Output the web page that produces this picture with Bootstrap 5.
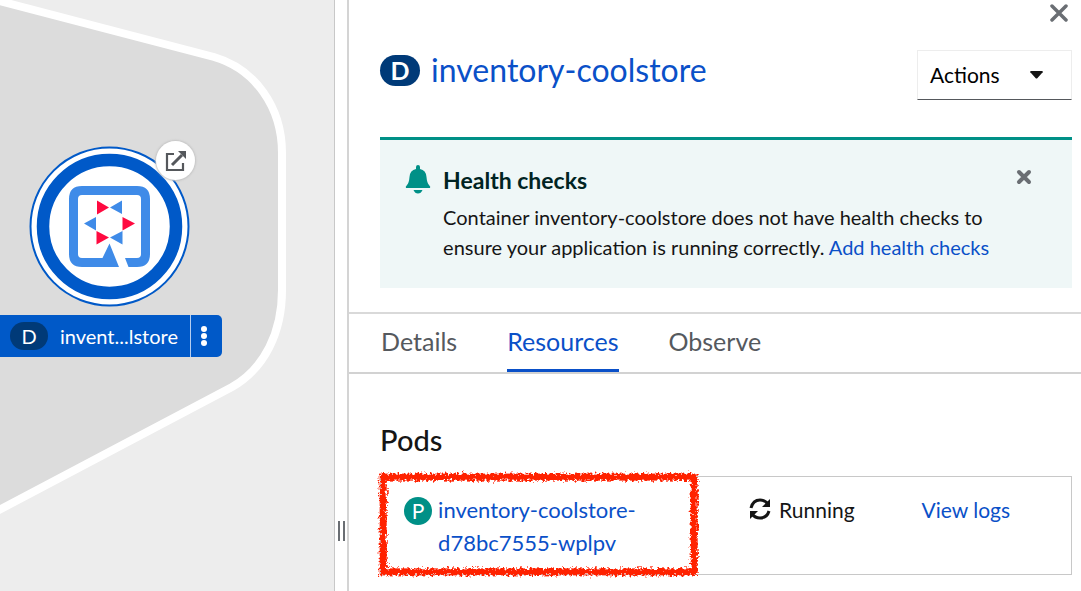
<!DOCTYPE html>
<html lang="en">
<head>
<meta charset="utf-8">
<meta name="viewport" content="width=device-width, initial-scale=1">
<title>inventory-coolstore</title>
<link href="https://cdn.jsdelivr.net/npm/bootstrap@5.3.0/dist/css/bootstrap.min.css" rel="stylesheet">
<style>
  body { font-family: Lato, "Open Sans", sans-serif; font-size: 21px; line-height: 30px; color: #151515; }
  a { color: #0a50c8; text-decoration: none; }
  a:hover { text-decoration: underline; }
  .topology { flex: 0 0 31%; background: #ededed; border-right: 1px solid #c8c8c8; }
  .group-shape, .node-shape { position: absolute; left: 0; top: 0; }
  .open-url { position: absolute; left: 156px; top: 141px; width: 39px; height: 39px; background: #fff; box-shadow: 0 0 2px 1px #c4c4c4; }
  .node-label { position: absolute; left: -6px; top: 315px; height: 42px; width: 228px; background: #0059c8; border-radius: 5px; color: #fff; font-size: 20px; }
  .node-label a { color: #fff; }
  .kind { background: #003a78; color: #fff; border-radius: 16px; text-align: center; }
  .kind-node { width: 38px; height: 28px; line-height: 28px; font-size: 20px; }
  .kind-title { width: 40px; height: 31px; line-height: 31px; font-size: 25px; font-weight: 700; }
  .kind-pod { width: 28px; height: 28px; line-height: 28px; font-size: 21px; background: #009087; }
  .kebab { width: 32px; padding-right: 4px; box-shadow: inset 1px 0 #b4cdf0; }
  .splitter { flex: 0 0 12px; gap: 3px; padding-top: 471px; }
  .splitter i { width: 2px; height: 20px; background: #6a6e73; }
  .drawer { min-width: 0; border-left: 2px solid #d4d4d4; }
  .gutters { padding-left: 31px; padding-right: 9px; }
  .close-row { height: 50px; padding: 4px 11px; }
  .title-line { gap: 11px; }
  .drawer-title { font-size: 32px; line-height: 40px; font-weight: 400; }
  .actions { width: 155px; height: 50px; padding: 0 12px; border: 1px solid #ededed; border-bottom-color: #55585c; background: #fff; }
  .notice { margin-top: 37px; height: 151px; padding: 25px 40px 0 25px; background: #eff7f7; border-top: 3px solid #009087; font-size: 20px; }
  .notice-title { font-size: 23px; line-height: 30px; margin-bottom: 7px; font-weight: 700; color: #002423; }
  .tabs-bar { margin-top: 24px; height: 62px; gap: 50px; border-top: 2px solid #d9d9d9; border-bottom: 2px solid #d2d2d2; padding-left: 32px; }
  .tabs-bar .nav-link { padding: 0; font-size: 25px; line-height: 55px; height: 58px; color: #55595e; border-bottom: 3px solid transparent; }
  .tabs-bar .nav-link.active { color: #0a50c8; border-color: #0a50c8; }
  .pods-title { font-size: 29px; line-height: 36px; font-weight: 500; margin: 48px 0 18px; }
  .pod-row { border: 1px solid #c8c8c8; height: 99px; padding-top: 16px; line-height: 33px; }
  .pod-row > div { padding: 0 0 0 23px; }
  .pod-name { font-size: 22px; margin-left: 6px; }
  .highlight { position: absolute; left: -1px; top: -20px; width: 92%; height: 103px; overflow: visible; pointer-events: none; }
</style>
</head>
<body>
<div class="d-flex vh-100 overflow-hidden">
  <main class="topology position-relative overflow-hidden">
    <svg class="group-shape" width="334" height="591" aria-hidden="true">
      <path d="M-20 -4 L214 57 C255 69 282 107 282 153 V290 C282 332 265 368 232 387 L-20 520Z" fill="#dcdcdc" stroke="#fff" stroke-width="8"/>
    </svg>
    <svg class="node-shape" width="200" height="320" role="img" aria-label="Quarkus deployment">
      <circle cx="109.500" cy="226.500" r="79" fill="#fff" stroke="#0059c8" stroke-width="2"/>
      <circle cx="109.500" cy="226.500" r="66.500" fill="#fff" stroke="#0059c8" stroke-width="12.500"/>
      <path fill="#3f8be8" fill-rule="evenodd" d="M82 186H137Q150 186 150 199V254Q150 267 137 267H128.500L125 258H137Q141 258 141 254V199Q141 195 137 195H82Q78 195 78 199V254Q78 258 82 258H102.500L109.500 243.500L119 267H82Q69 267 69 254V199Q69 186 82 186Z"/>
      <path fill="#3f8be8" d="M122 200.500V214L110 207.500ZM96 217V230.500L84 223.500ZM122.500 231V244.500L110 237.500Z"/>
      <path fill="#ff0a40" d="M97 200.500V214.500L109 207.500ZM122.500 217V230.500L135 223.500ZM96.500 231V244.500L109 237.500Z"/>
    </svg>
    <a class="open-url rounded-circle d-flex align-items-center justify-content-center" href="#" aria-label="Open URL">
      <svg width="22" height="22" viewBox="0 0 22 22" fill="none" stroke="#55585c" stroke-width="2.200"><path d="M9 4H2V20H18V13"/><path d="M7 15L17 5" stroke-width="3"/><path d="M13 1H21V9Z" fill="#55585c" stroke="none"/></svg>
    </a>
    <div class="node-label d-flex align-items-stretch">
      <div class="d-flex align-items-center flex-fill">
        <span class="kind kind-node ms-3">D</span><a class="ms-2 ps-1" href="#">invent...lstore</a>
      </div>
      <button type="button" class="kebab btn py-0 ps-0 border-0 rounded-0 d-flex align-items-center justify-content-center" aria-label="Node actions">
        <svg width="6" height="24" fill="#fff"><circle cx="3" cy="5" r="3"/><circle cx="3" cy="12" r="3"/><circle cx="3" cy="19" r="3"/></svg>
      </button>
    </div>
  </main>
  <div class="splitter d-flex justify-content-center align-items-center" role="separator" aria-orientation="vertical" aria-label="Resize"><i></i><i></i></div>

  <aside class="drawer flex-fill overflow-hidden">
    <div class="close-row d-flex justify-content-end align-items-start">
      <button type="button" class="btn p-0 border-0 d-flex" aria-label="Close"><svg width="22" height="18" stroke="#6a6e73" stroke-width="3.500" stroke-linecap="round"><path d="M4 2L18 16M18 2L4 16"/></svg></button>
    </div>
    <div class="gutters">
      <header class="d-flex justify-content-between align-items-start">
        <div class="title-line d-flex align-items-center">
          <span class="kind kind-title">D</span>
          <h1 class="drawer-title mb-0"><a href="#">inventory-coolstore</a></h1>
        </div>
        <button type="button" class="actions d-flex align-items-center justify-content-between">Actions
          <svg class="me-3" width="13" height="8" fill="#151515"><path d="M1 0H12Q14 1 12 2L7.500 7Q6.500 8 5.500 7L1 2Q-1 1 1 0Z"/></svg></button>
      </header>
      <section class="notice d-flex align-items-start">
        <svg class="flex-shrink-0" width="26" height="29" viewBox="0 0 26 29" fill="#009087"><path d="M11 4V2Q11 0 13 0T15 2V4Q21 5 21.500 12Q22 18 24 20Q26 22 25 23H1Q0 22 2 20Q4 18 4.500 12Q5 5 11 4ZM8.500 25H17.500Q16 28.500 13 28.500T8.500 25Z"/></svg>
        <div class="flex-fill ms-2 ps-1">
          <div class="d-flex justify-content-between align-items-start">
            <h2 class="notice-title">Health checks</h2>
            <button type="button" class="btn p-0 border-0 d-flex mt-1" aria-label="Dismiss"><svg width="16" height="16" stroke="#6a6e73" stroke-width="4" stroke-linecap="round"><path d="M3 3L13 13M13 3L3 13"/></svg></button>
          </div>
          <p class="mb-0">Container inventory-coolstore does not have health checks to<br>ensure your application is running correctly. <a href="#">Add health checks</a></p>
        </div>
      </section>
    </div>
    <nav class="tabs-bar nav flex-nowrap">
      <a class="nav-link" href="#">Details</a>
      <a class="nav-link active" aria-current="page" href="#">Resources</a>
      <a class="nav-link" href="#">Observe</a>
    </nav>
    <section class="gutters">
      <h2 class="pods-title">Pods</h2>
      <div class="pod-row row g-0">
        <div class="col-6 position-relative d-flex align-items-start">
          <span class="kind kind-pod flex-shrink-0 rounded-circle mt-1">P</span>
          <a class="pod-name" href="#">inventory-coolstore-<wbr>d78bc7555-wplpv</a>
          <svg class="highlight" aria-hidden="true">
            <defs><filter id="crayon" x="-5%" y="-10%" width="110%" height="120%"><feTurbulence type="fractalNoise" baseFrequency="0.400" numOctaves="3" seed="4"/><feDisplacementMap in="SourceGraphic" scale="8" xChannelSelector="R" yChannelSelector="G"/></filter></defs>
            <g filter="url(#crayon)"><rect x="1%" y="4%" width="98%" height="92%" fill="none" stroke="#ff2000" stroke-width="7"/></g>
          </svg>
        </div>
        <div class="col-3 d-flex align-items-start">
          <svg class="mt-1 me-2" width="22" height="24" fill="none" stroke="#151515" stroke-width="3"><path d="M2 11Q4 3 11 3Q16 3 19 7M20 14Q18 21 11 21Q6 21 3 17"/><path d="M21 2V10H13ZM1 22V14H9Z" fill="#151515" stroke="none"/></svg>
          <span>Running</span>
        </div>
        <div class="col-3"><a href="#">View logs</a></div>
      </div>
    </section>
  </aside>
</div>
<script src="https://cdn.jsdelivr.net/npm/bootstrap@5.3.0/dist/js/bootstrap.bundle.min.js"></script>
</body>
</html>
